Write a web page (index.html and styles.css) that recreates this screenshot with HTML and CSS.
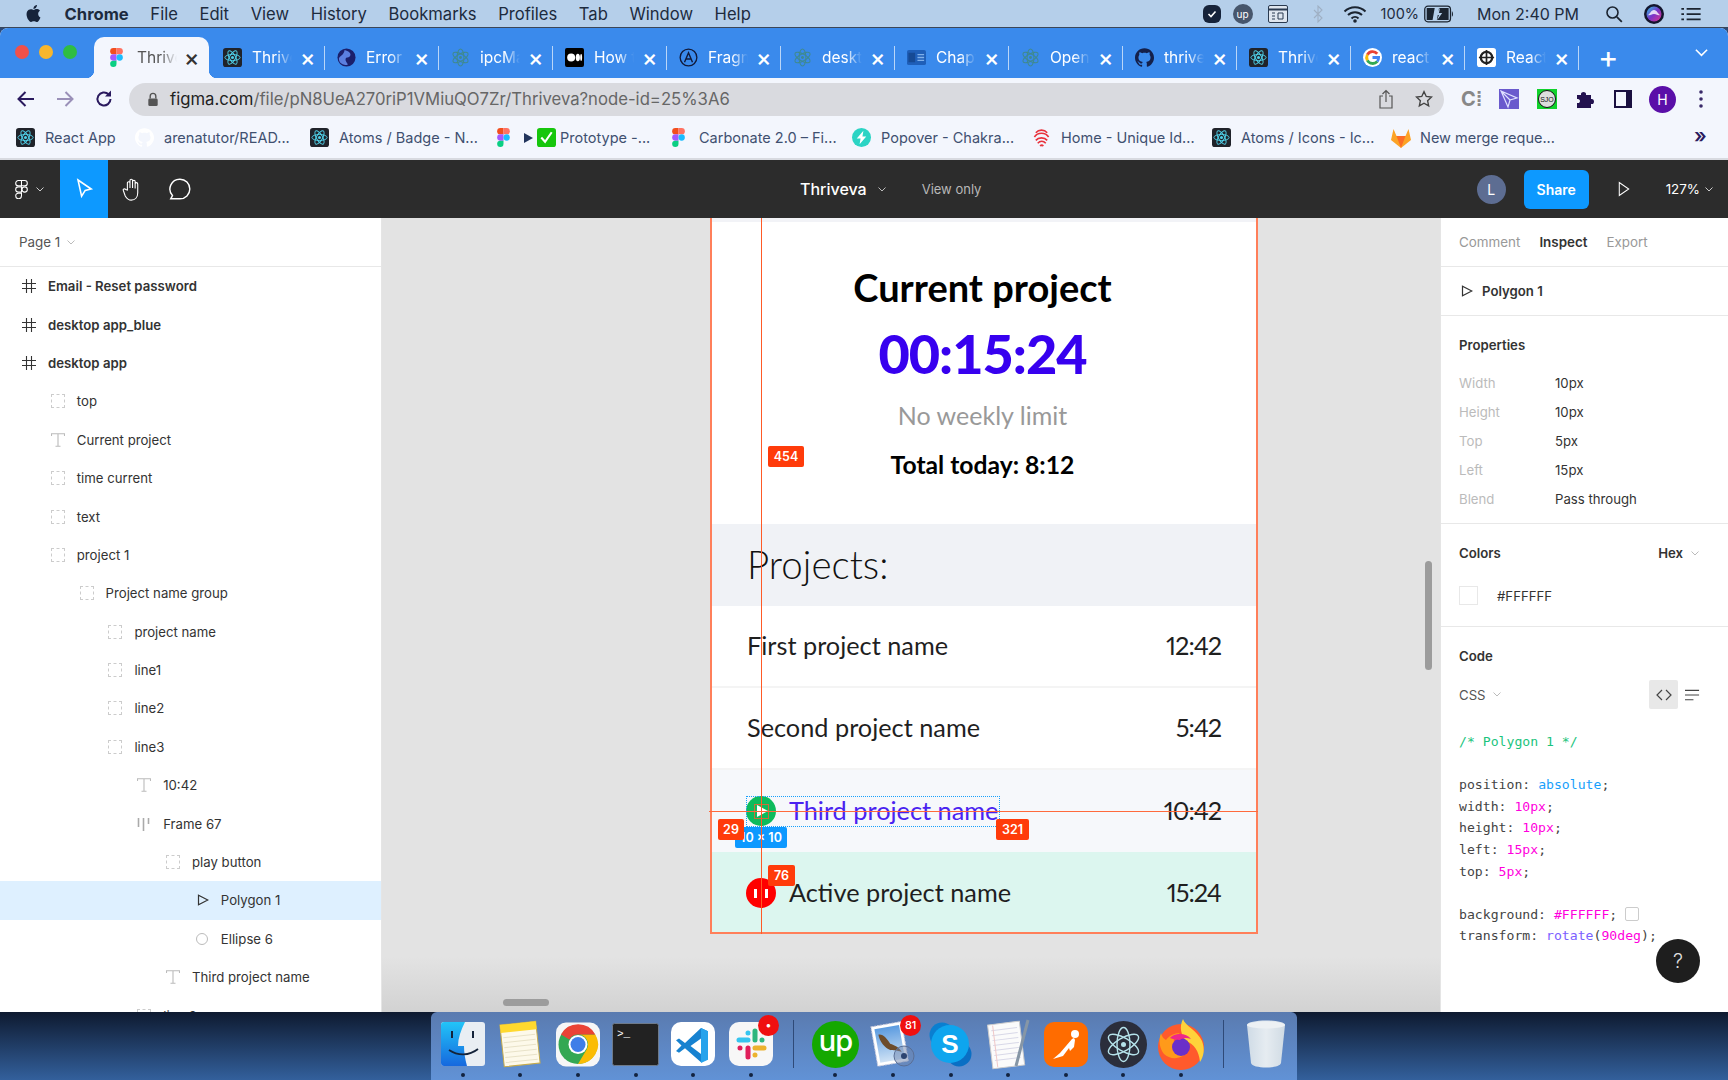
FILE: index.html
```html
<!DOCTYPE html>
<html lang="en">
<head>
    <meta charset="UTF-8">
    <meta name="viewport" content="width=device-width, initial-scale=1.0">
    <title>Thriveva - Figma</title>
    <link rel="stylesheet" href="styles.css">
</head>
<body>
    <!-- shared icons -->
    <svg class="defs" width="0" height="0">
        <symbol id="figma" viewBox="0 0 12 18">
            <path fill="#f24e1e" d="M0 3a3 3 0 0 1 3-3h3v6H3a3 3 0 0 1-3-3z"/>
            <path fill="#ff7262" d="M6 0h3a3 3 0 0 1 0 6H6z"/>
            <path fill="#a259ff" d="M0 9a3 3 0 0 1 3-3h3v6H3a3 3 0 0 1-3-3z"/>
            <circle fill="#1abcfe" cx="9" cy="9" r="3"/>
            <path fill="#0acf83" d="M0 15a3 3 0 0 1 3-3h3v3a3 3 0 0 1-6 0z"/>
        </symbol>
        <symbol id="react" viewBox="0 0 20 20">
            <rect width="20" height="20" rx="3" fill="#20232a"/>
            <g fill="none" stroke="#4fd0e8" stroke-width="1">
                <ellipse cx="10" cy="10" rx="8" ry="3.2"/>
                <ellipse cx="10" cy="10" rx="8" ry="3.2" transform="rotate(60 10 10)"/>
                <ellipse cx="10" cy="10" rx="8" ry="3.2" transform="rotate(120 10 10)"/>
            </g>
            <circle cx="10" cy="10" r="1.6" fill="#4fd0e8"/>
        </symbol>
        <symbol id="atom" viewBox="0 0 20 20">
            <g fill="none" stroke="#3f8a8f" stroke-width="1.1">
                <ellipse cx="10" cy="10" rx="9" ry="3.6" transform="rotate(30 10 10)"/>
                <ellipse cx="10" cy="10" rx="9" ry="3.6" transform="rotate(90 10 10)"/>
                <ellipse cx="10" cy="10" rx="9" ry="3.6" transform="rotate(150 10 10)"/>
            </g>
            <circle cx="10" cy="10" r="1.5" fill="#3f8a8f"/>
        </symbol>
        <symbol id="github" viewBox="0 0 24 24">
            <path d="M12 .297c-6.63 0-12 5.373-12 12 0 5.303 3.438 9.8 8.205 11.385.6.113.82-.258.82-.577 0-.285-.01-1.04-.015-2.04-3.338.724-4.042-1.61-4.042-1.61C4.422 18.07 3.633 17.7 3.633 17.7c-1.087-.744.084-.729.084-.729 1.205.084 1.838 1.236 1.838 1.236 1.07 1.835 2.809 1.305 3.495.998.108-.776.417-1.305.76-1.605-2.665-.3-5.466-1.332-5.466-5.93 0-1.31.465-2.38 1.235-3.22-.135-.303-.54-1.523.105-3.176 0 0 1.005-.322 3.3 1.23.96-.267 1.98-.399 3-.405 1.02.006 2.04.138 3 .405 2.28-1.552 3.285-1.23 3.285-1.23.645 1.653.24 2.873.12 3.176.765.84 1.23 1.91 1.23 3.22 0 4.61-2.805 5.625-5.475 5.92.42.36.81 1.096.81 2.22 0 1.606-.015 2.896-.015 3.286 0 .315.21.69.825.57C20.565 22.092 24 17.592 24 12.297c0-6.627-5.373-12-12-12"/>
        </symbol>
        <symbol id="google" viewBox="0 0 20 20">
            <circle cx="10" cy="10" r="10" fill="#fff"/>
            <path fill="none" stroke="#ea4335" stroke-width="3" d="M15 6a6.5 6.5 0 0 0-10.4 1"/>
            <path fill="none" stroke="#fbbc05" stroke-width="3" d="M4.6 7a6.5 6.5 0 0 0 0 6"/>
            <path fill="none" stroke="#34a853" stroke-width="3" d="M4.6 13a6.5 6.5 0 0 0 10.4 1.2"/>
            <path fill="none" stroke="#4285f4" stroke-width="3" d="M15 14.2c1-1 1.4-2.2 1.4-4.2H10"/>
        </symbol>
        <symbol id="hash" viewBox="0 0 14 14">
            <path fill="none" stroke="#333" stroke-width="1.1" d="M4.5 0v14M9.5 0v14M0 4.5h14M0 9.5h14"/>
        </symbol>
        <symbol id="textlayer" viewBox="0 0 14 14">
            <path fill="none" stroke="#bbb" stroke-width="1.1" d="M.5 3V.7h13V3M7 .7v12.6M4.5 13.3h5"/>
        </symbol>
        <symbol id="triangle" viewBox="0 0 12 12">
            <path fill="none" stroke="currentColor" stroke-width="1.2" d="M1.5 1.2v9.6L10.8 6z"/>
        </symbol>
        <symbol id="chevron" viewBox="0 0 8 5">
            <path fill="none" stroke="currentColor" d="M.5.5 4 4 7.5.5"/>
        </symbol>
    </svg>

    <header class="menubar">
        <nav class="menu-left">
            <svg class="apple" viewBox="0 0 24 24"><path d="M12.152 6.896c-.948 0-2.415-1.078-3.96-1.04-2.04.027-3.91 1.183-4.961 3.014-2.117 3.675-.546 9.103 1.519 12.09 1.013 1.454 2.208 3.09 3.792 3.039 1.52-.065 2.09-.987 3.935-.987 1.831 0 2.35.987 3.96.948 1.637-.026 2.676-1.48 3.676-2.948 1.156-1.688 1.636-3.325 1.662-3.415-.039-.013-3.182-1.221-3.22-4.857-.026-3.04 2.48-4.494 2.597-4.559-1.429-2.09-3.623-2.324-4.39-2.376-2-.156-3.675 1.09-4.61 1.09zM15.53 3.83c.843-1.012 1.4-2.427 1.245-3.83-1.207.052-2.662.805-3.532 1.818-.78.896-1.454 2.338-1.273 3.714 1.338.104 2.715-.688 3.559-1.701"/></svg>
            <b>Chrome</b>
            <span>File</span><span>Edit</span><span>View</span><span>History</span><span>Bookmarks</span><span>Profiles</span><span>Tab</span><span>Window</span><span>Help</span>
        </nav>
        <div class="menu-right">
            <svg class="st st-check" viewBox="0 0 18 18"><rect width="18" height="18" rx="6" fill="#16233a"/><path d="m5.5 9 2.500 2.500 4.500-5" fill="none" stroke="#fff" stroke-width="1.600"/></svg>
            <span class="st-up">up</span>
            <svg class="st st-win" viewBox="0 0 20 18"><rect x=".5" y=".5" width="19" height="17" rx="1.500" fill="#dfe6ef" stroke="#2a3a50"/><path d="M.5 4.500h19" stroke="#2a3a50" stroke-width="2"/><path d="M10 8h5v6h-5zM4 8h3M4 11h3M4 14h3" fill="none" stroke="#2a3a50"/></svg>
            <svg class="st st-bt" viewBox="0 0 10 18"><path d="m1 5 8 8-4 4V1l4 4-8 8" fill="none" stroke="#9fb0c4" stroke-width="1.100"/></svg>
            <svg class="st st-wifi" viewBox="0 0 24 18"><g fill="none" stroke="#1b2430" stroke-width="2"><path d="M1.500 6.500a15 15 0 0 1 21 0"/><path d="M5 10a10 10 0 0 1 14 0"/><path d="M8.500 13.500a5 5 0 0 1 7 0"/></g><circle cx="12" cy="16" r="1.800" fill="#1b2430"/></svg>
            <span class="st-pct">100%</span>
            <svg class="st st-batt" viewBox="0 0 28 16"><rect x=".7" y=".7" width="24" height="14.600" rx="3" fill="none" stroke="#1b2430" stroke-width="1.200"/><path d="M2.500 2.500h7.500l-2 11H2.500zM14 2.500h9v11H12z" fill="#1b2430"/><path d="M15 2l-4 7h3l-2 5 5-7h-3z" fill="#b5cfea"/><path d="M26 5.500c1.200.4 1.600 4.600 0 5z" fill="#1b2430"/></svg>
            <span class="st-clock">Mon 2:40 PM</span>
            <svg class="st st-search" viewBox="0 0 18 18"><circle cx="7.500" cy="7.500" r="5.500" fill="none" stroke="#1b2430" stroke-width="1.600"/><path d="m11.800 11.800 5 5" stroke="#1b2430" stroke-width="1.800"/></svg>
            <svg class="st st-siri" viewBox="0 0 20 20"><defs><linearGradient id="siri" x1="0" y1="0" x2="1" y2="1"><stop offset="0" stop-color="#27c7e8"/><stop offset=".5" stop-color="#7a35c9"/><stop offset="1" stop-color="#e0348a"/></linearGradient></defs><circle cx="10" cy="10" r="10" fill="#14162e"/><circle cx="10" cy="10" r="7.500" fill="url(#siri)"/><path d="M4 11c2-1 3-5 6-5s4 4 6 5c-2 1-3-1-6-1s-4 2-6 1z" fill="#fff" opacity=".8"/></svg>
            <svg class="st st-list" viewBox="0 0 22 16"><path d="M6 2h16M6 8h16M6 14h16M0 2h3M0 8h3M0 14h3" stroke="#1b2430" stroke-width="2"/></svg>
        </div>
    </header>

    <div class="window">
        <div class="tabstrip">
            <div class="lights"><i class="red"></i><i class="yellow"></i><i class="green"></i></div>
            <div class="tab active"><svg class="fav fav-fig"><use href="#figma"/></svg><span class="tab-title">Thrive</span><span class="tab-x">×</span></div>
            <div class="tab"><svg class="fav"><use href="#react"/></svg><span class="tab-title">Thrive</span><span class="tab-x">×</span></div>
            <div class="tab"><svg class="fav" viewBox="0 0 20 20"><circle cx="10" cy="10" r="9.500" fill="#1b1f6b"/><path d="M8 2c4 1 7 3 6 6s-5 1-5 4 3 4 2 6c-5 0-9-2-9-7 1-3 5-3 6-9z" fill="#5b7fe0"/></svg><span class="tab-title">Error</span><span class="tab-x">×</span></div>
            <div class="tab"><svg class="fav"><use href="#atom"/></svg><span class="tab-title">ipcMa</span><span class="tab-x">×</span></div>
            <div class="tab"><svg class="fav" viewBox="0 0 20 20"><rect width="20" height="20" rx="2" fill="#000"/><circle cx="6.500" cy="10" r="4.200" fill="#fff"/><ellipse cx="13.500" cy="10" rx="2.200" ry="4" fill="#fff"/><ellipse cx="17" cy="10" rx="1" ry="3.600" fill="#fff"/></svg><span class="tab-title">How t</span><span class="tab-x">×</span></div>
            <div class="tab"><svg class="fav" viewBox="0 0 20 20"><circle cx="10" cy="10" r="8.800" fill="#3a8aec" stroke="#111a3a" stroke-width="1.400"/><path d="m5.800 15 4.200-10 4.200 10M7.500 11.500h5" fill="none" stroke="#111a3a" stroke-width="1.500"/></svg><span class="tab-title">Fragn</span><span class="tab-x">×</span></div>
            <div class="tab"><svg class="fav"><use href="#atom"/></svg><span class="tab-title">deskt</span><span class="tab-x">×</span></div>
            <div class="tab"><svg class="fav" viewBox="0 0 20 20"><rect y="2" width="20" height="16" rx="2" fill="#1f5fb8"/><rect x="1.500" y="5" width="7" height="10" fill="#164a94"/><path d="M11 7h7M11 10h7M11 13h7" stroke="#7fb0ea" stroke-width="1.400"/></svg><span class="tab-title">Chapt</span><span class="tab-x">×</span></div>
            <div class="tab"><svg class="fav"><use href="#atom"/></svg><span class="tab-title">Open</span><span class="tab-x">×</span></div>
            <div class="tab"><svg class="fav fav-gh"><use href="#github"/></svg><span class="tab-title">thrive</span><span class="tab-x">×</span></div>
            <div class="tab"><svg class="fav"><use href="#react"/></svg><span class="tab-title">Thrive</span><span class="tab-x">×</span></div>
            <div class="tab"><svg class="fav"><use href="#google"/></svg><span class="tab-title">react</span><span class="tab-x">×</span></div>
            <div class="tab"><svg class="fav" viewBox="0 0 20 20"><rect width="20" height="20" rx="3" fill="#fff"/><circle cx="10" cy="10" r="6" fill="none" stroke="#222" stroke-width="2.400"/><path d="M10 2v16M2 10h16" stroke="#222" stroke-width="1.800"/></svg><span class="tab-title">React</span><span class="tab-x">×</span></div>
            <span class="new-tab">+</span>
            <svg class="tab-menu"><use href="#chevron"/></svg>
        </div>

        <div class="toolbar">
            <svg class="nav-icon" viewBox="0 0 20 20"><path d="M18 10H3M9.500 3 2.500 10l7 7" fill="none" stroke="#2a1a5e" stroke-width="2"/></svg>
            <svg class="nav-icon" viewBox="0 0 20 20"><path d="M2 10h15M10.500 3l7 7-7 7" fill="none" stroke="#9a90b8" stroke-width="2"/></svg>
            <svg class="nav-icon" viewBox="0 0 20 20"><path d="M16.500 10a6.500 6.500 0 1 1-2-4.700" fill="none" stroke="#2a1a5e" stroke-width="2"/><path d="M17 1.500v6h-6z" fill="#2a1a5e"/></svg>
            <div class="omnibox">
                <svg class="lock" viewBox="0 0 12 16"><path d="M3 7V4.500a3 3 0 0 1 6 0V7" fill="none" stroke="#555" stroke-width="1.500"/><rect x="1" y="7" width="10" height="8" rx="1.500" fill="#555"/></svg>
                <span class="url"><b>figma.com</b>/file/pN8UeA270riP1VMiuQO7Zr/Thriveva?node-id=25%3A6</span>
                <svg class="omni-icon" viewBox="0 0 16 20"><path d="M5 7H2v12h12V7h-3M8 13V1.500M4.500 5 8 1.500 11.500 5" fill="none" stroke="#555" stroke-width="1.200"/></svg>
                <svg class="omni-icon" viewBox="0 0 20 20"><path d="m10 1.800 2.500 5.400 5.800.7-4.300 4 1.200 5.800-5.200-3-5.200 3 1.200-5.800-4.300-4 5.800-.7z" fill="none" stroke="#444" stroke-width="1.500"/></svg>
            </div>
            <div class="ext-icons">
                <span class="ext-c">C⁞</span>
                <svg class="ext" viewBox="0 0 20 20"><rect width="20" height="20" fill="#6a5acd"/><path d="M2 2 18 9 11 11 9 18zM2 2l9 9" fill="none" stroke="#dfe0ff" stroke-width="1.200"/></svg>
                <svg class="ext" viewBox="0 0 20 20"><rect width="20" height="20" fill="#11d12c"/><circle cx="10" cy="10" r="8.500" fill="#ddd" stroke="#111"/><text x="10" y="12.500" font-size="7" text-anchor="middle" font-family="Liberation Sans" fill="#111">SJO</text></svg>
                <svg class="ext" viewBox="0 0 20 20"><path d="M2 6h4c-1-4 6-4 5 0h5v4c4-1 4 6 0 5v4H2v-5c4 1 4-5 0-4z" fill="#23124f"/></svg>
                <svg class="ext" viewBox="0 0 20 20"><path d="M2 2h16v16H2z" fill="#f3f6fd" stroke="#1a1040" stroke-width="2"/><path d="M13 2h5v16h-5z" fill="#1a1040"/></svg>
                <span class="profile">H</span>
                <svg class="ext dots" viewBox="0 0 4 20"><circle cx="2" cy="3" r="1.800"/><circle cx="2" cy="10" r="1.800"/><circle cx="2" cy="17" r="1.800"/></svg>
            </div>
        </div>

        <div class="bookmarks">
            <a class="bm w-react"><svg class="fav"><use href="#react"/></svg>React App</a>
            <a class="bm w-arena"><svg class="fav fav-ghost"><use href="#github"/></svg>arenatutor/READ...</a>
            <a class="bm w-badge"><svg class="fav"><use href="#react"/></svg>Atoms / Badge - N...</a>
            <a class="bm w-proto"><svg class="fav fav-fig"><use href="#figma"/></svg><i class="play-mark"></i><svg class="fav fav-tick" viewBox="0 0 20 20"><rect width="20" height="20" rx="3" fill="#16c60c"/><path d="m4.500 10 4 4.500 7-10" fill="none" stroke="#fff" stroke-width="2.200"/></svg>Prototype -...</a>
            <a class="bm w-carbon"><svg class="fav fav-fig"><use href="#figma"/></svg>Carbonate 2.0 – Fi...</a>
            <a class="bm w-chakra"><svg class="fav" viewBox="0 0 20 20"><circle cx="10" cy="10" r="10" fill="#2bd4c4"/><path d="M12 3 5 11h4l-1 6 7-8h-4z" fill="#fff"/></svg>Popover - Chakra...</a>
            <a class="bm w-home"><svg class="fav" viewBox="0 0 20 20"><g fill="none" stroke="#e8323c" stroke-width="1.700"><path d="M4 5a8 8 0 0 1 12 0"/><path d="M2.500 9.500a9 9 0 0 1 15 0"/><path d="M4 13c3-3.500 9-3.500 12 0"/><path d="M6 16c2.500-2.500 6-2.500 8.500 0"/><path d="M8.500 19c1-1 2.500-1 3.500 0"/></g></svg>Home - Unique Id...</a>
            <a class="bm w-icons"><svg class="fav"><use href="#react"/></svg>Atoms / Icons - Ic...</a>
            <a class="bm w-merge"><svg class="fav fav-gitlab" viewBox="0 0 22 20"><path d="M11 20 1 12 3.500 1 6.500 8h9l3-7L21 12z" fill="#fca326"/><path d="M11 20 6.500 8h9z" fill="#fc6d26"/></svg>New merge reque...</a>
            <span class="bm-more">»</span>
        </div>

        <div class="figbar">
            <div class="fig-tools">
                <div class="fig-logo">
                    <svg class="logo-mark" viewBox="0 0 12 18"><g fill="none" stroke="#fff" stroke-width="1"><path d="M.5 3A2.500 2.500 0 0 1 3 .5h3v5H3A2.500 2.500 0 0 1 .5 3z"/><path d="M6 .5h3a2.500 2.500 0 0 1 0 5H6z"/><path d="M.5 9A2.500 2.500 0 0 1 3 6.500h3v5H3A2.500 2.500 0 0 1 .5 9z"/><circle cx="9" cy="9" r="2.500"/><path d="M.5 15A2.500 2.500 0 0 1 3 12.500h3V15a2.500 2.500 0 0 1-5.500 0z"/></g></svg>
                    <svg class="chev"><use href="#chevron"/></svg>
                </div>
                <div class="tool on"><svg viewBox="0 0 20 20"><path d="M5 2.500 16 10l-5 1.200L8 16z" fill="none" stroke="#fff" stroke-width="1.300"/></svg></div>
                <div class="tool"><svg viewBox="0 0 24 26"><path d="M7 14V6.500a1.400 1.400 0 0 1 2.800 0V12 3.800a1.400 1.400 0 0 1 2.800 0V12 5a1.400 1.400 0 0 1 2.800 0v7.500-5a1.400 1.400 0 0 1 2.800 0V17c0 5-3 8-7 8-3.500 0-5-2-6.500-4.500L2.700 15c-1-1.700 1.200-3 2.400-1.500z" fill="none" stroke="#fff" stroke-width="1.200"/></svg></div>
                <div class="tool"><svg viewBox="0 0 22 22"><path d="M11 2a9 9 0 0 1 0 18H2.500l1.600-3A9 9 0 0 1 11 2z" fill="none" stroke="#fff" stroke-width="1.300"/></svg></div>
            </div>
            <div class="fig-title">
                <strong>Thriveva</strong>
                <svg class="chev"><use href="#chevron"/></svg>
                <span class="view-only">View only</span>
            </div>
            <div class="fig-actions">
                <span class="avatar">L</span>
                <button class="share" type="button">Share</button>
                <svg class="present" viewBox="0 0 14 18"><path d="M1.500 1.500v15l11-7.500z" fill="none" stroke="#fff" stroke-width="1.200"/></svg>
                <span class="zoom-level">127%</span>
                <svg class="chev"><use href="#chevron"/></svg>
            </div>
        </div>

        <div class="workspace">
            <aside class="layers">
                <div class="page-pick">Page 1 <svg class="chev"><use href="#chevron"/></svg></div>
                <ul class="layer-list">
                    <li class="layer frame lv0"><svg class="lic"><use href="#hash"/></svg>Email - Reset password</li>
                    <li class="layer frame lv0"><svg class="lic"><use href="#hash"/></svg>desktop app_blue</li>
                    <li class="layer frame lv0"><svg class="lic"><use href="#hash"/></svg>desktop app</li>
                    <li class="layer lv1"><i class="lic dotted"></i>top</li>
                    <li class="layer lv1"><svg class="lic"><use href="#textlayer"/></svg>Current project</li>
                    <li class="layer lv1"><i class="lic dotted"></i>time current</li>
                    <li class="layer lv1"><i class="lic dotted"></i>text</li>
                    <li class="layer lv1"><i class="lic dotted"></i>project 1</li>
                    <li class="layer lv2"><i class="lic dotted"></i>Project name group</li>
                    <li class="layer lv3"><i class="lic dotted"></i>project name</li>
                    <li class="layer lv3"><i class="lic dotted"></i>line1</li>
                    <li class="layer lv3"><i class="lic dotted"></i>line2</li>
                    <li class="layer lv3"><i class="lic dotted"></i>line3</li>
                    <li class="layer lv4"><svg class="lic"><use href="#textlayer"/></svg>10:42</li>
                    <li class="layer lv4"><svg class="lic" viewBox="0 0 14 14"><path d="M1.500 1v9M6.500 1v13M11.500 1v6" stroke="#aaa" stroke-width="1.600"/></svg>Frame 67</li>
                    <li class="layer lv5"><i class="lic dotted"></i>play button</li>
                    <li class="layer lv6 selected"><svg class="lic lic-tri"><use href="#triangle"/></svg>Polygon 1</li>
                    <li class="layer lv6"><i class="lic ring"></i>Ellipse 6</li>
                    <li class="layer lv5"><svg class="lic"><use href="#textlayer"/></svg>Third project name</li>
                    <li class="layer lv4"><i class="lic dotted"></i>line 2</li>
                </ul>
            </aside>

            <main class="canvas">
                <section class="artboard">
                    <div class="summary">
                        <h1>Current project</h1>
                        <div class="timer">00:15:24</div>
                        <p class="limit">No weekly limit</p>
                        <p class="total">Total today: 8:12</p>
                    </div>
                    <h2 class="projects-head">Projects:</h2>
                    <div class="project-row"><span>First project name</span><span class="row-time">12:42</span></div>
                    <div class="project-row"><span>Second project name</span><span class="row-time">5:42</span></div>
                    <div class="project-row hovered">
                        <span class="project-name">
                            <i class="round-btn play"></i>
                            <span class="third">Third project name</span>
                        </span>
                        <span class="row-time">10:42</span>
                    </div>
                    <div class="project-row active">
                        <span class="project-name">
                            <i class="round-btn pause"></i>
                            <span>Active project name</span>
                        </span>
                        <span class="row-time">15:24</span>
                    </div>

                    <!-- inspect overlays -->
                    <div class="guide-frame"></div>
                    <span class="size-tag">10 × 10</span>
                    <div class="select-dots"></div>
                    <div class="select-node"></div>
                    <div class="guide-v"></div>
                    <div class="guide-h"></div>
                    <span class="measure m-454">454</span>
                    <span class="measure m-29">29</span>
                    <span class="measure m-321">321</span>
                    <span class="measure m-76">76</span>
                </section>
                <div class="scroll-v"></div>
                <div class="scroll-h"></div>
            </main>

            <aside class="inspect">
                <div class="inspect-tabs"><span>Comment</span><span class="on">Inspect</span><span>Export</span></div>
                <div class="node-name"><svg class="lic-tri"><use href="#triangle"/></svg>Polygon 1</div>
                <section class="props">
                    <h3>Properties</h3>
                    <dl class="prop-grid">
                        <dt>Width</dt><dd>10px</dd>
                        <dt>Height</dt><dd>10px</dd>
                        <dt>Top</dt><dd>5px</dd>
                        <dt>Left</dt><dd>15px</dd>
                        <dt>Blend</dt><dd>Pass through</dd>
                    </dl>
                </section>
                <section class="colors">
                    <div class="section-top"><h3>Colors</h3><span class="hex-pick">Hex <svg class="chev"><use href="#chevron"/></svg></span></div>
                    <div class="color-row"><i class="swatch"></i>#FFFFFF</div>
                </section>
                <section class="code">
                    <h3>Code</h3>
                    <div class="code-top">
                        <span class="lang">CSS <svg class="chev"><use href="#chevron"/></svg></span>
                        <span class="code-btn">
                            <svg viewBox="0 0 16 12"><path d="M6 1 1 6l5 5M10 1l5 5-5 5" fill="none" stroke="#444" stroke-width="1.200"/></svg>
                        </span>
                        <svg class="wrap-icon" viewBox="0 0 16 12"><path d="M0 1h15M0 6h15M0 11h9" stroke="#444" stroke-width="1.200"/></svg>
                    </div>
<pre class="css-code"><span class="c-com">/* Polygon 1 */</span>

position: <span class="c-key">absolute</span>;
width: <span class="c-num">10px</span>;
height: <span class="c-num">10px</span>;
left: <span class="c-num">15px</span>;
top: <span class="c-num">5px</span>;

background: <span class="c-num">#FFFFFF</span>; <i class="code-swatch"></i>
transform: <span class="c-fn">rotate</span>(<span class="c-num">90deg</span>);</pre>
                </section>
                <span class="help">?</span>
            </aside>
        </div>
    </div>

    <footer class="desktop">
        <div class="dock">
            <!-- finder -->
            <div class="dock-app"><svg width="44" height="44" viewBox="0 0 44 44"><defs><linearGradient id="finder" x1="0" y1="0" x2="0" y2="1"><stop offset="0" stop-color="#22c4f8"/><stop offset="1" stop-color="#1668de"/></linearGradient></defs><rect width="44" height="44" rx="3" fill="#e9eef3"/><path d="M0 3a3 3 0 0 1 3-3h21c-4 8-7 16-7 24h6c0 6 1 13 3 20H3a3 3 0 0 1-3-3z" fill="url(#finder)"/><path d="M11 9v7M32 9v7" stroke="#14233a" stroke-width="2"/><path d="M8 28c9 6 20 6 29-1" fill="none" stroke="#14233a" stroke-width="1.800"/></svg></div>
            <!-- notes -->
            <div class="dock-app"><svg width="44" height="50" viewBox="0 0 44 50"><g transform="rotate(-6 22 25)"><rect x="4" y="4" width="36" height="42" fill="#fdf9ea" stroke="#c6ab4a"/><rect x="4" y="4" width="36" height="8" fill="#ffd92e"/><path d="M6 17h32M6 22h32M6 27h32M6 32h32M6 37h32M6 42h32" stroke="#e8e2c8"/></g></svg></div>
            <!-- chrome -->
            <div class="dock-app"><svg width="44" height="45" viewBox="0 0 44 44"><rect width="44" height="44" rx="10" fill="#f6f6f6"/><circle cx="22" cy="22" r="19.500" fill="#34a853"/><path d="M22 12H39.300A19.500 19.500 0 0 1 22 41.500L30.660 27A10 10 0 0 0 22 12z" fill="#fbbc05"/><path d="M5 12A19.500 19.500 0 0 1 39.300 12H22A10 10 0 0 0 13.340 17z" fill="#ea4335"/><circle cx="22" cy="22" r="9.500" fill="#fff"/><circle cx="22" cy="22" r="7.500" fill="#3f7ee8"/></svg></div>
            <!-- terminal -->
            <div class="dock-app"><svg width="47" height="43" viewBox="0 0 47 43"><rect x=".5" y=".5" width="46" height="42" rx="2" fill="#222" stroke="#6e7a8a"/><text x="5" y="14" font-size="11" font-family="Liberation Mono" fill="#fff">&gt;_</text></svg></div>
            <!-- vscode -->
            <div class="dock-app"><svg width="44" height="44" viewBox="0 0 44 44"><rect width="44" height="44" rx="10" fill="#fff"/><path fill-rule="evenodd" d="M30 6 14 21l-6-4.500-3 1.800 5.500 5.200L5 29l3 1.800 6-4.500 16 14 7-3.300V9.300zm0 10.500v15.500L19.500 24z" fill="#1782d0"/><path d="M30 6l7 3.300v28.400L30 41z" fill="#27a3ec"/></svg></div>
            <!-- slack -->
            <div class="dock-app"><svg width="44" height="44" viewBox="0 0 44 44"><rect width="44" height="44" rx="10" fill="#f7f7f7"/><g stroke-width="5" stroke-linecap="round" fill="none"><path d="M10 18h9M19 11h0" stroke="#36c5f0"/><path d="M26 9v9M33 18h0" stroke="#2eb67d"/><path d="M26 26h9M26 33h0" stroke="#ecb22e"/><path d="M19 26v9M11 26h0" stroke="#e01e5a"/></g></svg><b class="dock-badge b-slack">•</b></div>
            <i class="dock-sep"></i>
            <!-- upwork -->
            <div class="dock-app"><svg width="47" height="47" viewBox="0 0 47 47"><circle cx="23.500" cy="23.500" r="23.500" fill="#14a800"/><text x="23.500" y="30" font-size="29" text-anchor="middle" font-family="Inter" font-weight="500" letter-spacing="-1" fill="#fff">up</text></svg></div>
            <!-- mail -->
            <div class="dock-app"><svg width="48" height="50" viewBox="0 0 48 50"><defs><linearGradient id="sky" x1="0" y1="0" x2="0" y2="1"><stop offset="0" stop-color="#5b9be0"/><stop offset="1" stop-color="#cfe2f5"/></linearGradient></defs><g transform="rotate(-10 20 24)"><rect x="5" y="5" width="31" height="40" fill="#fff" stroke="#ccd" stroke-dasharray="2 1"/><rect x="8" y="8" width="25" height="34" fill="url(#sky)"/><path d="M11 14c5 0 8 6 10 11 4 2 8 5 10 10-5-3-8-3-11-4-5-3-9-10-9-17z" fill="#6d4c2b"/></g><circle cx="35" cy="37" r="10" fill="#6f86ad" fill-opacity=".5" stroke="#5a6f96"/><circle cx="35" cy="37" r="3" fill="#2d4470"/></svg><b class="dock-badge b-mail">81</b></div>
            <!-- skype -->
            <div class="dock-app"><svg width="43" height="45" viewBox="0 0 43 45"><circle cx="13" cy="13" r="12.500" fill="#0a7fd0"/><circle cx="30" cy="32" r="12.500" fill="#0a6fc4"/><circle cx="21" cy="22" r="19" fill="#0ea5ee"/><text x="21" y="31" font-size="26" font-weight="700" text-anchor="middle" font-family="Liberation Sans" fill="#fff">S</text></svg></div>
            <!-- textedit -->
            <div class="dock-app"><svg width="44" height="52" viewBox="0 0 44 52"><g transform="rotate(-7 20 26)"><rect x="4" y="5" width="32" height="44" fill="#fbfbfb" stroke="#ccc"/><path d="M7 11h26M7 16h26M7 21h26M7 26h26M7 31h26M7 36h26M7 41h26" stroke="#d8d8e8"/><path d="M9 6v42" stroke="#f0c8c8"/></g><path d="M42 2 30 48" stroke="#8696a6" stroke-width="3"/></svg></div>
            <!-- postman -->
            <div class="dock-app"><svg width="44" height="45" viewBox="0 0 44 45"><rect width="44" height="45" rx="10" fill="#ff6c00"/><circle cx="31" cy="12" r="4" fill="#fff"/><path d="M28 17 16 31l-7 6 10-3 6-8 1 3 4-4 1-7-1-2z" fill="#fff"/></svg></div>
            <!-- electron -->
            <div class="dock-app"><svg width="47" height="47" viewBox="0 0 47 47"><circle cx="23.500" cy="23.500" r="23.500" fill="#2b2e3b"/><g fill="none" stroke="#b5e2ea" stroke-width="1.400"><ellipse cx="23.500" cy="23.500" rx="17" ry="6.500" transform="rotate(30 23.500 23.500)"/><ellipse cx="23.500" cy="23.500" rx="17" ry="6.500" transform="rotate(90 23.500 23.500)"/><ellipse cx="23.500" cy="23.500" rx="17" ry="6.500" transform="rotate(150 23.500 23.500)"/></g><circle cx="23.500" cy="23.500" r="2.500" fill="#b5e2ea"/></svg></div>
            <!-- firefox -->
            <div class="dock-app"><svg width="48" height="51" viewBox="0 0 48 51"><circle cx="24" cy="28" r="23" fill="#ff5a2c"/><path d="M26 0c2 7 14 11 19 22 3 8 2 15-2 21-1-11-6-18-14-21C24 16 22 8 26 0z" fill="#ffd23a"/><path d="M4 14c1 4 3 6 5 7 3-4 8-7 14-7-5 3-7 6-6 9 6-3 14 0 15 7-4 10-18 12-25 5C3 30 1 22 4 14z" fill="#ff9a1a"/><circle cx="24" cy="28" r="9" fill="#6a2fc9"/><path d="M13 19c4-5 16-6 21 1-5-2-9-1-11 1-4 0-7-1-10-2z" fill="#f0288a"/></svg></div>
            <i class="dock-sep"></i>
            <!-- trash -->
            <div class="dock-app no-dot"><svg width="40" height="48" viewBox="0 0 40 48"><defs><linearGradient id="glass" x1="0" y1="0" x2="1" y2="0"><stop offset="0" stop-color="#cfdbe6"/><stop offset=".5" stop-color="#e6ecf1"/><stop offset="1" stop-color="#d0dbe4"/></linearGradient></defs><path d="M1 5c0-6 38-6 38 0l-4 38c-1 6-29 6-30 0z" fill="url(#glass)"/><ellipse cx="20" cy="5" rx="19" ry="3.500" fill="#edf1f4"/></svg></div>
        </div>
    </footer>
</body>
</html>
```
FILE: styles.css
```css
* {
    box-sizing: border-box;
}
html, body {
    margin: 0;
    height: 100%;
}
body {
    width: 1728px;
    height: 1080px;
    overflow: hidden;
    font-family: Inter, "Liberation Sans", sans-serif;
    background-color: #2c4a78;
    display: flex;
    flex-direction: column;
}
.defs {
    position: absolute;
}
h1, h2, h3, p, ul, dl, dd, pre {
    margin: 0;
    padding: 0;
}

/* mac menu bar */
.menubar {
    height: 28px;
    flex-shrink: 0;
    background-color: #b5cfea;
    border-bottom: 1px solid #3a4658;
    display: flex;
    justify-content: space-between;
    align-items: center;
    font-size: 16.6px;
    color: #1d2b3e;
}
.menu-left {
    display: flex;
    align-items: center;
    gap: 21.6px;
    padding-left: 25px;
}
.apple {
    width: 17px;
    height: 19px;
    margin-right: 1px;
    fill: #16233a;
}
.menu-left b {
    font-weight: 700;
}
.menu-right {
    display: flex;
    align-items: center;
    padding-right: 26px;
    font-size: 16px;
}
.st {
    display: block;
    height: 18px;
}
.st-check { width: 18px; margin-right: 12px; }
.st-up {
    width: 20px;
    height: 20px;
    border-radius: 50%;
    margin-right: 15px;
    background-color: #47566c;
    color: #fff;
    font-size: 10px;
    line-height: 20px;
    text-align: center;
}
.st-win { width: 20px; margin-right: 25px; }
.st-bt { width: 10px; margin-right: 20px; }
.st-wifi { width: 24px; margin-right: 14px; }
.st-pct { margin-right: 5px; font-size: 14.5px; }
.st-batt { width: 30px; margin-right: 23px; }
.st-clock { margin-right: 26px; }
.st-search { width: 18px; margin-right: 21px; }
.st-siri { width: 20px; height: 20px; margin-right: 16px; }
.st-list { width: 22px; height: 14px; }

/* chrome */
.window {
    height: 984px;
    flex-shrink: 0;
    display: flex;
    flex-direction: column;
    background-color: #fff;
    border-radius: 8px 8px 0 0;
    overflow: hidden;
}
.tabstrip {
    height: 50px;
    flex-shrink: 0;
    background-color: #3a8aec;
    display: flex;
    align-items: flex-end;
    position: relative;
}
.lights {
    width: 94px;
    height: 50px;
    flex-shrink: 0;
    display: flex;
    gap: 10px;
    align-items: center;
    padding: 0 0 2px 15px;
}
.lights i {
    width: 14px;
    height: 14px;
    border-radius: 50%;
}
.red { background-color: #f0504a; }
.yellow { background-color: #f8b62c; }
.green { background-color: #2fbd43; }
.tab {
    width: 114px;
    height: 41px;
    flex-shrink: 0;
    display: flex;
    align-items: center;
    padding-left: 12px;
    color: #fff;
    font-size: 15.5px;
    position: relative;
}
.tab::before {
    content: "";
    position: absolute;
    right: 0;
    top: 9px;
    height: 24px;
    border-right: 1px solid rgba(255, 255, 255, .65);
}
.tab.active {
    width: 115px;
    margin-right: 2px;
    background-color: #f3f6fd;
    color: #555;
    border-radius: 10px 10px 0 0;
    padding-left: 16px;
}
/* flares at the foot of the open tab */
.tab.active::before, .tab.active::after {
    content: "";
    position: absolute;
    top: auto;
    bottom: 0;
    width: 8px;
    height: 8px;
    border: none;
}
.tab.active::before {
    left: -8px;
    right: auto;
    background: radial-gradient(circle at 0 0, transparent 8px, #f3f6fd 8.5px);
}
.tab.active::after {
    right: -8px;
    background: radial-gradient(circle at 100% 0, transparent 8px, #f3f6fd 8.5px);
}
.fav {
    width: 19px;
    height: 19px;
    flex-shrink: 0;
}
.fav-fig {
    width: 13px;
}
.fav-gh {
    fill: #14204a;
}
.tab-title {
    width: 40px;
    margin-left: 10px;
    white-space: nowrap;
    overflow: hidden;
    -webkit-mask-image: linear-gradient(90deg, #000 60%, transparent);
    mask-image: linear-gradient(90deg, #000 60%, transparent);
}
.active .tab-title {
    margin-left: 14px;
}
.tab-x {
    margin-left: 8px;
    font-size: 23px;
    line-height: 20px;
    font-weight: 500;
}
.active .tab-x {
    margin-left: 7px;
    color: #333;
}
.new-tab {
    margin: 0 0 2px 19px;
    font-size: 31px;
    line-height: 38px;
    color: #fff;
    font-weight: 400;
}
.tab-menu {
    width: 13px;
    height: 8px;
    position: absolute;
    left: 1695px;
    top: 21px;
    color: #fff;
}

.toolbar {
    height: 42px;
    flex-shrink: 0;
    background-color: #f3f6fd;
    display: flex;
    align-items: center;
    padding: 0 0 0 16px;
}
.nav-icon {
    width: 20px;
    height: 20px;
    margin-right: 19px;
}
.omnibox {
    width: 1315px;
    height: 33px;
    margin-left: -4px;
    border-radius: 17px;
    background-color: #d9dadf;
    display: flex;
    align-items: center;
    padding: 0 0 0 18px;
    font-size: 16.7px;
    color: #666;
}
.lock {
    width: 12px;
    height: 15px;
    margin-right: 11px;
}
.url b {
    font-weight: 400;
    color: #222;
}
.url {
    flex: 1;
    white-space: nowrap;
}
.omni-icon {
    width: 18px;
    height: 20px;
    margin-right: 20px;
}
.omni-icon:last-child {
    margin-right: 11px;
}
.ext-icons {
    display: flex;
    align-items: center;
    gap: 18px;
    margin-left: 17px;
}
.ext-c {
    width: 20px;
    font-size: 20px;
    font-weight: 700;
    color: #888;
    white-space: nowrap;
}
.ext {
    width: 20px;
    height: 20px;
    flex-shrink: 0;
}
.profile {
    width: 27px;
    height: 27px;
    margin: 0 -3px 0 -2px;
    border-radius: 50%;
    background-color: #5a0fa8;
    color: #fff;
    font-size: 14px;
    line-height: 27px;
    text-align: center;
}
.dots {
    width: 4px;
    margin-left: 8px;
    fill: #3a2a6a;
}

.bookmarks {
    height: 40px;
    flex-shrink: 0;
    background-color: #f3f6fd;
    border-bottom: 2px solid #d8dae0;
    display: flex;
    align-items: center;
    padding: 0 0 3px 16px;
    font-size: 14.5px;
    color: #3f5070;
    position: relative;
}
.bm {
    display: flex;
    align-items: center;
    gap: 10px;
    white-space: nowrap;
}
.w-react { width: 119px; }
.w-arena { width: 175px; }
.w-badge { width: 187px; }
.w-proto { width: 175px; gap: 0; }
.w-proto .fav-fig { margin-right: 14px; }
.w-proto .fav-tick { margin-right: 4px; }
.w-carbon { width: 180px; gap: 14px; }
.w-chakra { width: 180px; }
.w-home { width: 180px; }
.w-icons { width: 178px; }
.fav-ghost {
    fill: #fff;
}
.fav-gitlab {
    width: 22px;
    height: 20px;
    margin-right: -2px;
}
.play-mark {
    width: 0;
    height: 0;
    margin-right: 4px;
    border-left: 9px solid #22355c;
    border-top: 5px solid transparent;
    border-bottom: 5px solid transparent;
}
.bm-more {
    position: absolute;
    left: 1694px;
    top: 4px;
    font-size: 20px;
    font-weight: 600;
    color: #2a1a5e;
}

/* figma toolbar */
.figbar {
    height: 58px;
    flex-shrink: 0;
    background-color: #2c2c2c;
    display: grid;
    grid-template-columns: 1fr 1fr 1fr;
    align-items: center;
    color: #fff;
}
.chev {
    width: 8px;
    height: 5px;
    color: currentColor;
}
.fig-tools {
    display: flex;
    height: 58px;
}
.fig-logo {
    width: 60px;
    display: flex;
    align-items: center;
    gap: 8px;
    padding-left: 15px;
    color: #ccc;
}
.logo-mark {
    width: 13px;
    height: 19px;
}
.tool {
    width: 48px;
    display: flex;
    align-items: center;
    justify-content: center;
}
.tool.on {
    background-color: #0d99ff;
}
.tool svg {
    width: 24px;
    height: 24px;
}
.fig-title {
    display: flex;
    align-items: center;
    margin-left: 224px;
    white-space: nowrap;
    gap: 11px;
    color: #bbb;
}
.fig-title strong {
    font-size: 16px;
    font-weight: 500;
    color: #fff;
}
.view-only {
    margin-left: 25px;
    font-size: 13px;
    color: #b8b8b8;
}
.fig-actions {
    display: flex;
    align-items: center;
    justify-content: flex-end;
    padding-right: 15px;
    color: #ccc;
}
.avatar {
    width: 29px;
    height: 29px;
    border-radius: 50%;
    background-color: #5d6d92;
    font-size: 14px;
    line-height: 29px;
    text-align: center;
    color: #fff;
}
.share {
    width: 65px;
    height: 39px;
    margin-left: 18px;
    border: none;
    border-radius: 6px;
    background-color: #0d99ff;
    color: #fff;
    font-family: inherit;
    font-size: 14px;
    font-weight: 600;
}
.present {
    width: 12px;
    height: 16px;
    margin: 0 36px 0 29px;
}
.zoom-level {
    margin-right: 5px;
    font-size: 13.4px;
    color: #fff;
}

/* main figma area */
.workspace {
    flex: 1;
    min-height: 0;
    display: grid;
    grid-template-columns: 382px 1058px 288px;
    font-size: 13.2px;
    color: #333;
}
.layers {
    background-color: #fff;
    border-right: 1px solid #e5e5e5;
    overflow: hidden;
    border-bottom-left-radius: 8px;
}
.page-pick {
    height: 49px;
    display: flex;
    align-items: center;
    gap: 7px;
    padding-left: 19px;
    border-bottom: 1px solid #e8e8e8;
    color: #555;
    font-size: 13.4px;
}
.page-pick .chev {
    color: #bbb;
}
.layer-list {
    list-style: none;
}
.layer {
    height: 38.4px;
    display: flex;
    align-items: center;
    white-space: nowrap;
}
.layer.frame {
    font-weight: 600;
}
.lic {
    width: 14px;
    height: 14px;
    margin-right: 12px;
    flex-shrink: 0;
}
.lv0 { padding-left: 22px; }
.lv1 { padding-left: 50.8px; }
.lv2 { padding-left: 79.6px; }
.lv3 { padding-left: 108.4px; }
.lv4 { padding-left: 137.2px; }
.lv5 { padding-left: 166px; }
.lv6 { padding-left: 194.8px; }
.lv0 .lic { margin-right: 12px; }
.dotted {
    border: 1px dashed #ccc;
}
.ring {
    border: 1.5px solid #bbb;
    border-radius: 50%;
    width: 12px;
    height: 12px;
    margin-left: 1px;
    margin-right: 13px;
}
.selected {
    background-color: #def0ff;
}
.lic-tri {
    color: #333;
    width: 12px;
    height: 12px;
}
.layer .lic-tri {
    margin-left: 2px;
    margin-right: 12px;
}

.canvas {
    position: relative;
    overflow: hidden;
    background: linear-gradient(#e3e3e3 0, #e3e3e3 93%, #d2d2d2 100%);
}
.artboard {
    width: 548px;
    height: 716px;
    margin-left: 328px;
    background-color: #fff;
    position: relative;
    font-family: Lato, Inter, sans-serif;
}
.summary {
    height: 306px;
    border-top: 4px solid #f2f3f7;
    text-align: center;
    color: #000;
    padding: 42px 3px 0 0;
}
.summary h1 {
    font-size: 38px;
    line-height: 46px;
    font-weight: 700;
}
.timer {
    margin-top: 12px;
    font-size: 54px;
    line-height: 64px;
    font-weight: 900;
    letter-spacing: -1px;
    color: #3700ef;
}
.limit {
    margin-top: 12px;
    font-size: 25px;
    line-height: 34px;
    color: #999;
    font-weight: 400;
}
.total {
    margin-top: 17px;
    font-size: 24.7px;
    line-height: 32px;
    font-weight: 700;
}
.projects-head {
    height: 82px;
    margin: 0;
    padding-left: 37px;
    background-color: #f0f2f6;
    font-size: 38.5px;
    line-height: 80px;
    font-weight: 300;
    color: #111;
}
.project-row {
    height: 82px;
    display: flex;
    justify-content: space-between;
    align-items: center;
    padding: 0 37px 2px;
    font-size: 25.3px;
    color: #1f1f1f;
    border-bottom: 2px solid #f4f4f4;
}
.row-time {
    font-feature-settings: "pnum";
    letter-spacing: -1px;
}
.project-row.hovered {
    background-color: #f6f8fb;
    border-bottom: none;
}
.project-row.active {
    background-color: #dcf6ef;
    border-bottom: none;
}
.project-name {
    display: flex;
    align-items: center;
    gap: 13px;
    margin-left: -1px;
}
.third {
    color: #4a22f0;
}
.round-btn {
    width: 30px;
    height: 30px;
    border-radius: 50%;
    display: flex;
    align-items: center;
    justify-content: center;
}
.hovered .round-btn, .active .round-btn {
    margin-top: 2px;
}
.round-btn.play {
    background-color: #0dbb5c;
}
.round-btn.play::before {
    content: "";
    border-left: 11px solid #fff;
    border-top: 6px solid transparent;
    border-bottom: 6px solid transparent;
    margin-left: 3px;
}
.round-btn.pause {
    background-color: #f00;
}
.round-btn.pause::before {
    content: "";
    width: 8px;
    height: 9px;
    border-left: 3px solid #fff;
    border-right: 3px solid #fff;
}

/* overlays drawn by figma inspect mode */
.guide-frame {
    position: absolute;
    inset: 0;
    border: 2px solid #ff7f5a;
    border-top: none;
}
.guide-v {
    position: absolute;
    left: 51px;
    top: 0;
    bottom: 0;
    width: 1px;
    background-color: #ff5a26;
}
.guide-h {
    position: absolute;
    left: -1px;
    right: 0;
    top: 593px;
    height: 1px;
    background-color: #ff6a3c;
}
.select-dots {
    position: absolute;
    left: 36px;
    top: 578px;
    width: 254px;
    height: 31px;
    border: 1px dotted #18a0fb;
}
.select-node {
    position: absolute;
    left: 44px;
    top: 586px;
    width: 15px;
    height: 15px;
    border: 1px solid #c8703a;
}
.measure, .size-tag {
    position: absolute;
    height: 21px;
    border-radius: 2px;
    background-color: #ff3b0a;
    color: #fff;
    font-family: Inter, sans-serif;
    font-size: 12.5px;
    font-weight: 600;
    line-height: 21px;
    text-align: center;
}
.m-454 { left: 58px; top: 228px; width: 36px; }
.m-29 { left: 8px; top: 601px; width: 26px; }
.m-321 { left: 286px; top: 601px; width: 33px; }
.m-76 { left: 58px; top: 647px; width: 27px; }
.size-tag {
    left: 25px;
    top: 609px;
    width: 52px;
    background-color: #0d99ff;
}
.scroll-v {
    position: absolute;
    right: 8px;
    top: 343px;
    width: 7px;
    height: 109px;
    border-radius: 4px;
    background-color: #9c9c9c;
}
.scroll-h {
    position: absolute;
    left: 121px;
    bottom: 6px;
    width: 46px;
    height: 7px;
    border-radius: 4px;
    background-color: #9c9c9c;
}

/* inspect panel */
.inspect {
    background-color: #fff;
    position: relative;
    border-left: 1px solid #e5e5e5;
    border-bottom-right-radius: 8px;
}
.inspect-tabs {
    height: 49px;
    display: flex;
    align-items: center;
    gap: 19px;
    padding-left: 18px;
    border-bottom: 1px solid #e8e8e8;
    color: #999;
    font-size: 13.4px;
}
.inspect-tabs .on {
    color: #333;
    font-weight: 600;
}
.node-name {
    height: 49px;
    display: flex;
    align-items: center;
    gap: 9px;
    padding-left: 20px;
    border-bottom: 1px solid #e8e8e8;
    font-weight: 600;
    color: #333;
}
.inspect h3 {
    font-size: 13.2px;
    font-weight: 600;
    color: #333;
}
.props {
    height: 208px;
    padding: 21px 18px 0;
    border-bottom: 1px solid #e8e8e8;
}
.prop-grid {
    display: grid;
    grid-template-columns: 96px 1fr;
    grid-auto-rows: 28.8px;
    align-items: center;
    margin-top: 16px;
}
.prop-grid dt {
    color: #bbb;
}
.colors {
    height: 103px;
    padding: 21px 18px 0;
    border-bottom: 1px solid #e8e8e8;
}
.section-top {
    display: flex;
    justify-content: space-between;
    padding-right: 11px;
}
.hex-pick {
    display: flex;
    align-items: center;
    gap: 8px;
    font-weight: 600;
}
.hex-pick .chev, .lang .chev {
    color: #bbb;
}
.color-row {
    display: flex;
    align-items: center;
    gap: 19px;
    margin-top: 25px;
}
.swatch {
    width: 19px;
    height: 19px;
    border: 1px solid #e8e8e8;
}
.code {
    padding: 21px 18px 0;
}
.code-top {
    display: flex;
    align-items: center;
    margin-top: 16px;
    height: 29px;
}
.lang {
    flex: 1;
    display: flex;
    align-items: center;
    gap: 7px;
    color: #555;
}
.code-btn {
    width: 29px;
    height: 29px;
    display: flex;
    align-items: center;
    justify-content: center;
    background-color: #e8e8e8;
    border-radius: 2px;
}
.code-btn svg {
    width: 16px;
    height: 12px;
}
.wrap-icon {
    width: 15px;
    height: 12px;
    margin: 0 10px 0 7px;
}
.css-code {
    margin-top: 22px;
    font-family: "DejaVu Sans Mono", monospace;
    font-size: 13.15px;
    line-height: 21.6px;
    color: #444;
}
.c-com { color: #1bc47d; }
.c-key { color: #18a0fb; }
.c-num { color: #ff00dd; }
.c-fn { color: #7b61ff; }
.code-swatch {
    display: inline-block;
    width: 14px;
    height: 14px;
    border: 1px solid #ccc;
    border-radius: 2px;
    vertical-align: -2px;
}
.help {
    position: absolute;
    left: 215px;
    top: 721px;
    width: 44px;
    height: 44px;
    border-radius: 50%;
    background-color: #1e1e1e;
    color: #ddd;
    font-size: 20px;
    font-weight: 300;
    line-height: 44px;
    text-align: center;
}

/* desktop and dock */
.desktop {
    flex: 1;
    background: linear-gradient(#0e1a30, #33609c);
}
.dock {
    width: 866px;
    height: 68px;
    margin-left: 431px;
    padding-left: 3px;
    border-radius: 6px 6px 0 0;
    background: linear-gradient(#5a7bb0, #6192d6);
    display: flex;
    align-items: flex-start;
}
.dock-app {
    width: 57.6px;
    height: 64px;
    flex-shrink: 0;
    display: flex;
    align-items: center;
    justify-content: center;
    position: relative;
}
.dock-app svg {
    display: block;
    flex-shrink: 0;
}
.dock-app::after {
    content: "";
    position: absolute;
    left: 26.8px;
    top: 61px;
    width: 4px;
    height: 4px;
    border-radius: 50%;
    background-color: #12233f;
}
.dock-app.no-dot::after {
    display: none;
}
.dock-sep {
    width: 1px;
    height: 48px;
    margin: 8px 13px 0;
    flex-shrink: 0;
    background-color: #2f4a78;
}
.dock-badge {
    position: absolute;
    width: 21px;
    height: 21px;
    border-radius: 50%;
    background-color: #f01010;
    color: #fff;
    font-size: 11px;
    font-weight: 500;
    line-height: 21px;
    text-align: center;
}
.b-slack { left: 36px; top: 3px; }
.b-mail { left: 36px; top: 3px; }
```
